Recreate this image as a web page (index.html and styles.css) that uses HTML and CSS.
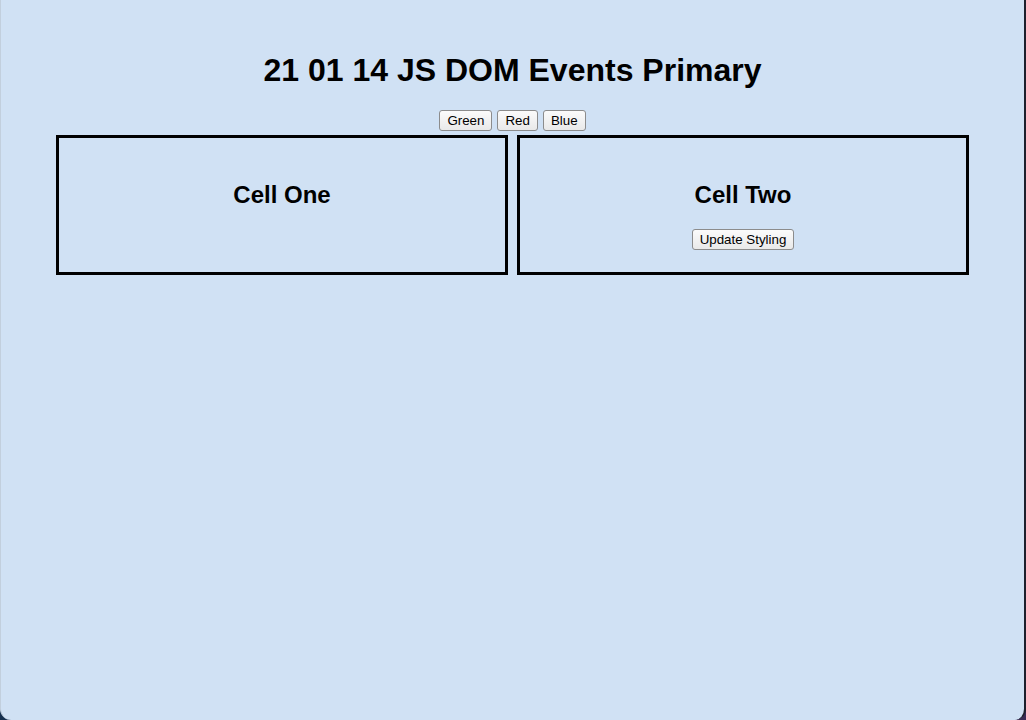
FILE: index.html
```html
<!DOCTYPE html>
<html lang="en">
<head>
    <meta charset="UTF-8">
    <title>21 01 14 JS DOM Events Primary</title>
    <link rel="stylesheet" href="styles.css">
</head>
<body>
    <div class="page">
        <h1>21 01 14 JS DOM Events Primary</h1>
        <div class="controls">
            <button type="button" id="green">Green</button>
            <button type="button" id="red">Red</button>
            <button type="button" id="blue">Blue</button>
        </div>
        <div class="cells">
            <div class="cell" id="cell-one">
                <h2>Cell One</h2>
            </div>
            <div class="cell" id="cell-two">
                <h2>Cell Two</h2>
                <button type="button" id="update">Update Styling</button>
            </div>
        </div>
    </div>
</body>
</html>
```

FILE: styles.css
```css
html {
    margin: 0;
    padding: 0;
    background: linear-gradient(90deg, #15304f, #3a2a55);
}
body {
    margin: 0;
    padding: 0;
    font-family: "Liberation Sans", Arial, sans-serif;
    color: #000;
}
.page {
    box-sizing: border-box;
    height: 720px;
    padding-top: 31px;
    background-color: #d0e1f4;
    border-left: 1px solid #c2cfdd;
    border-right: 2px solid #1d1f2c;
    border-radius: 0 0 11px 11px;
}
h1 {
    margin: 21px 0 21px;
    font-size: 32px;
    line-height: 37px;
    text-align: center;
}
button {
    font-family: "Liberation Sans", Arial, sans-serif;
    font-size: 13.33px;
    line-height: 15px;
    padding: 2px 7px;
    color: #000;
    background: linear-gradient(#fbfbfb, #e9e9e9);
    border: 1px solid #8c8c8c;
    border-radius: 3px;
}
.controls {
    display: flex;
    justify-content: center;
    gap: 5px;
    margin-bottom: 4px;
}
.cells {
    display: flex;
    gap: 9px;
    padding-left: 55px;
}
.cell {
    box-sizing: border-box;
    width: 452px;
    padding: 20px 20px 22px;
    border: 3px solid #000;
    text-align: center;
}
.cell h2 {
    margin: 23px 0 20px;
    font-size: 24px;
    line-height: 28px;
}
```
